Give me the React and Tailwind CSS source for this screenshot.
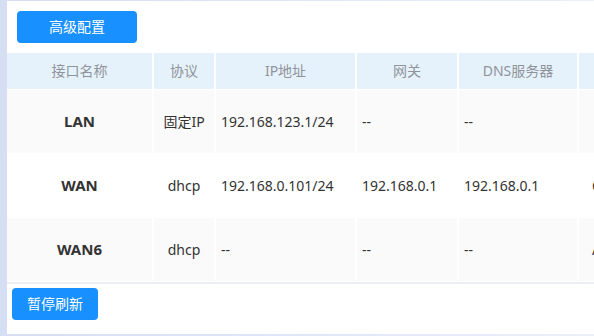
const rows = [
  { name: 'LAN', proto: '固定IP', ip: '192.168.123.1/24', gw: '--', dns: '--', extra: '', bg: 'bg-[#fafafa]' },
  { name: 'WAN', proto: 'dhcp', ip: '192.168.0.101/24', gw: '192.168.0.1', dns: '192.168.0.1', extra: 'Connected', bg: 'bg-white' },
  { name: 'WAN6', proto: 'dhcp', ip: '--', gw: '--', dns: '--', extra: 'Auto', bg: 'bg-[#fafafa]' },
]

const cols = 'grid grid-cols-[145px_60px_139px_100px_118px_140px] gap-x-[2px]'

const App = () => {
  return (
    <div
      className="h-[336px] w-[594px] overflow-hidden bg-gradient-to-r from-[#d6def4] to-[#eaeffa] pl-[7px] pt-px pb-[2px]"
      style={{ fontFamily: '"Segoe UI", "Noto Sans", "Noto Sans CJK SC", sans-serif' }}
    >
      <div className="flex h-full flex-col overflow-hidden bg-white">
        <div className="px-[10px] pt-[10px] pb-[10px]">
          <button
            type="button"
            className="h-8 w-[120px] rounded-[4px] bg-[#1890ff] text-sm text-white"
          >
            高级配置
          </button>
        </div>

        <div className="w-max">
          <div className={`${cols} h-9 text-sm text-[#909399]`}>
            {['接口名称', '协议', 'IP地址', '网关', 'DNS服务器', ''].map((h, i) => (
              <div key={i} className="flex items-center justify-center bg-[#e5f2fc]">
                {h}
              </div>
            ))}
          </div>

          {rows.map((r) => (
            <div key={r.name} className={`${cols} mt-px h-[63px] text-sm text-[#333]`}>
              <div className={`${r.bg} flex items-center justify-center text-[15px] font-bold`}>{r.name}</div>
              <div className={`${r.bg} flex items-center justify-center`}>{r.proto}</div>
              <div className={`${r.bg} flex items-center px-[5px]`}>{r.ip}</div>
              <div className={`${r.bg} flex items-center px-[5px]`}>{r.gw}</div>
              <div className={`${r.bg} flex items-center px-[5px]`}>{r.dns}</div>
              <div className={`${r.bg} flex items-center px-[13px]`}>{r.extra}</div>
            </div>
          ))}
          <div className="mt-px h-[2px] bg-[#ebeef5]" />
        </div>

        <div className="px-[5px] pt-[4px]">
          <button
            type="button"
            className="h-8 rounded-[4px] bg-[#1890ff] px-[15px] text-sm text-white"
          >
            暂停刷新
          </button>
        </div>
      </div>
    </div>
  )
}

export default App
